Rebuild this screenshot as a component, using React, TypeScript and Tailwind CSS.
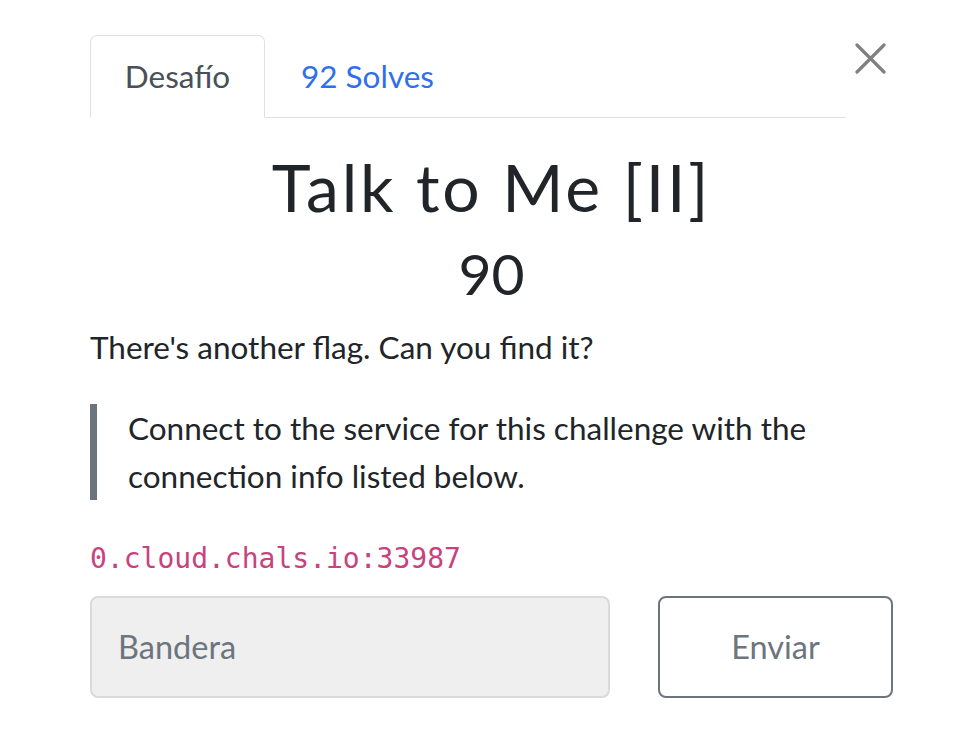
export default function App() {
  return (
    <div className="min-h-[742px] bg-white font-['Lato','Noto_Sans',sans-serif] text-[#212529]">
      <div className="w-[803px] ml-[90px] pt-[35px]">
        <div className="flex items-start">
          <ul className="flex flex-1 border-b border-[#dee2e6]">
            <li className="-mb-px">
              <div className="h-[83px] w-[175px] flex items-center justify-center rounded-t-[7px] border border-[#dee2e6] border-b-white bg-white text-[31.5px] text-[#495057]">
                Desafío
              </div>
            </li>
            <li className="-mb-px">
              <div className="h-[83px] pl-[36px] flex items-center text-[31.5px] text-[#2f6fee]">
                92 Solves
              </div>
            </li>
          </ul>
          <button className="ml-[9px] mr-[7px] mt-[8px] w-[31px] h-[31px] flex items-center justify-center text-[#808080]">
            <svg width="31" height="31" viewBox="0 0 31 31" fill="none" stroke="currentColor" strokeWidth="3.2" strokeLinecap="round">
              <path d="M2 2 L29 29 M29 2 L2 29" />
            </svg>
          </button>
        </div>

        <div className="text-center">
          <h3 className="mt-[33px] text-[66px] leading-[72px] tracking-[2.8px]">Talk to Me [II]</h3>
          <h4 className="mt-[17px] text-[57px] leading-[66px]">90</h4>
        </div>

        <p className="mt-[17px] text-[31.5px] leading-[48px]">There's another flag. Can you find it?</p>

        <blockquote className="mt-[33px] border-l-[7px] border-[#6c757d] pl-[31px] text-[31.5px] leading-[48px]">
          Connect to the service for this challenge with the connection info listed below.
        </blockquote>

        <p className="mt-[42px] font-['DejaVu_Sans_Mono',monospace] text-[28px] leading-[34px] text-[#c7437e]">0.cloud.chals.io:33987</p>

        <div className="mt-[20px] flex items-center gap-[48px]">
          <div className="w-[520px] h-[102px] rounded-[8px] border-2 border-[#d8dadd] bg-[#efefef] flex items-center pl-[26px] text-[32.5px] text-[#6c757d]">
            Bandera
          </div>
          <button className="w-[235px] h-[102px] rounded-[8px] border-2 border-[#6c757d] bg-white text-[32.5px] text-[#6c757d]">
            Enviar
          </button>
        </div>
      </div>
    </div>
  );
}
